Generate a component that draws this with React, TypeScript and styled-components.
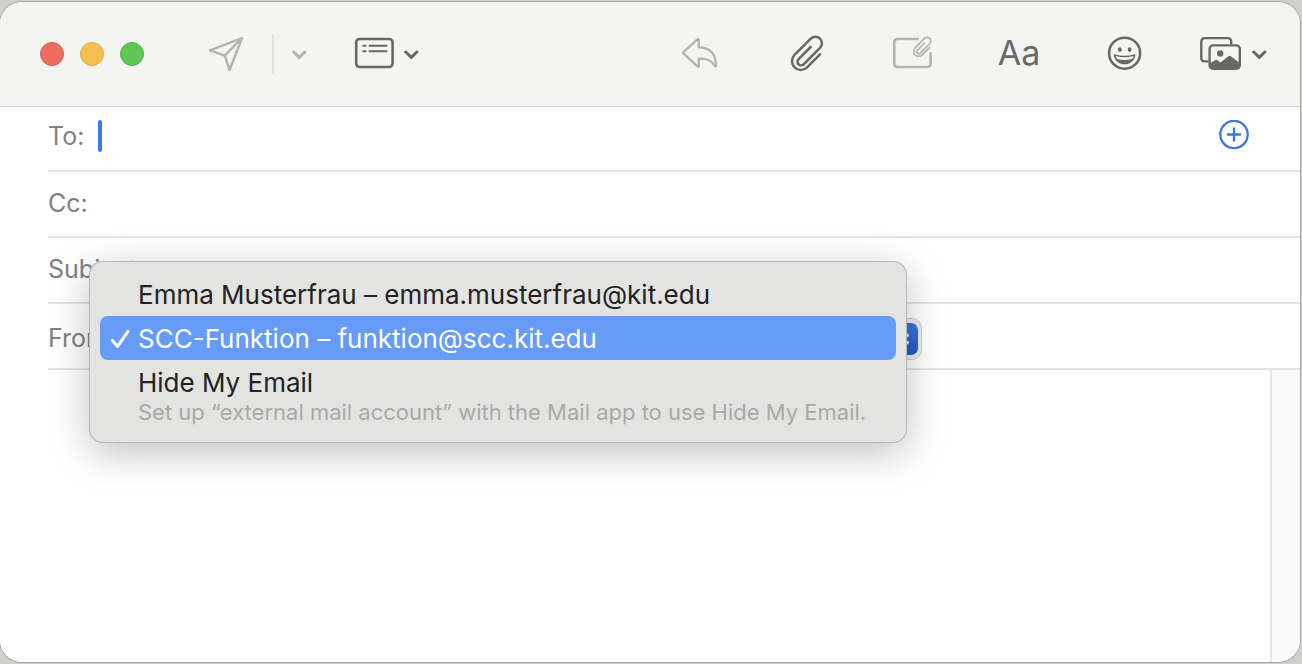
import React from "react";
import styled, { createGlobalStyle } from "styled-components";

const GlobalStyle = createGlobalStyle`
  *, *::before, *::after { box-sizing: border-box; }
  body {
    margin: 0;
    background: #cfcfcd;
    font-family: Inter, "Liberation Sans", sans-serif;
  }
  button, input, select, textarea { font: inherit; color: inherit; }
`;

const Page = styled.div`
  display: flex;
  min-height: 100vh;
  padding: 2px 2px 2px 0;
`;

const Window = styled.main`
  flex: 1;
  min-width: 0;
  display: flex;
  flex-direction: column;
  background: #fff;
  border-radius: 22px;
  overflow: hidden;
  box-shadow: 0 0 0 1px #a6a6a4;
`;

const Toolbar = styled.header`
  display: flex;
  align-items: center;
  justify-content: space-between;
  height: 105px;
  padding: 0 33px 0 40px;
  background: #f4f4f2;
  border-bottom: 1px solid #d4d4d2;
`;

const Group = styled.div<{ $gap: number }>`
  display: flex;
  align-items: center;
  gap: ${(p) => p.$gap}px;
`;

const Light = styled.button<{ $fill: string; $edge: string }>`
  width: 24px;
  height: 24px;
  padding: 0;
  border: 1px solid ${(p) => p.$edge};
  border-radius: 50%;
  background: ${(p) => p.$fill};
`;

const Tool = styled.button<{ $dim?: boolean; $cell?: boolean }>`
  display: flex;
  align-items: center;
  justify-content: center;
  height: 40px;
  width: ${(p) => (p.$cell ? "60px" : "auto")};
  padding: 0;
  border: 0;
  background: none;
  color: ${(p) => (p.$dim ? "#b4b3b1" : "#696866")};

  svg {
    display: block;
    fill: none;
    stroke: currentColor;
    stroke-linecap: round;
    stroke-linejoin: round;
  }
`;

const FormatTool = styled(Tool)`
  padding: 0 0 2px 2px;
  font-size: 34px;
  line-height: 38px;
`;

const Divider = styled.span`
  width: 2px;
  height: 40px;
  background: #e2e2e0;
`;

const SendGroup = styled(Group)`
  margin: 0 27px 0 44px;
`;

const Fields = styled.section`
  position: relative;
  z-index: 1;
  padding-left: 48px;
  border-top: 1px solid #f6f6f5;
`;

const Row = styled.div<{ $height?: number; $top?: number }>`
  position: relative;
  display: flex;
  align-items: flex-start;
  height: ${(p) => p.$height ?? 66}px;
  padding-top: ${(p) => p.$top ?? 15}px;
  border-bottom: 2px solid #e4e4e4;
  font-size: 25px;
  line-height: 32px;
  color: #808080;
`;

const Caret = styled.span`
  width: 4px;
  height: 32px;
  margin-left: 14px;
  border-radius: 2px;
  background: #3b78f0;
`;

const TextField = styled.input`
  flex: 1;
  min-width: 0;
  height: 32px;
  padding: 0;
  border: 0;
  outline: 0;
  background: none;
  color: #222;
`;

const AddButton = styled.button`
  height: 30px;
  margin-right: 51px;
  padding: 0;
  border: 0;
  background: none;
  color: #3e76df;

  svg {
    display: block;
    fill: none;
    stroke: currentColor;
    stroke-width: 2.3;
    stroke-linecap: round;
  }
`;

const Picker = styled.div`
  position: relative;
  flex: 0 1 799px;
  min-width: 0;
  height: 42px;
  margin: -4px 0 0 8px;
`;

const AccountSelect = styled.select`
  display: block;
  appearance: none;
  width: 100%;
  height: 42px;
  padding: 0 48px 0 12px;
  border: 1px solid #d0d0d0;
  border-radius: 10px;
  background: #ececec;
  color: #222;
`;

const Stepper = styled.span`
  position: absolute;
  top: 5px;
  right: 4px;
  width: 32px;
  height: 32px;
  border-radius: 7px;
  background: linear-gradient(#3a78e4, #2459cb);
  pointer-events: none;

  svg {
    display: block;
    fill: none;
    stroke: #fff;
    stroke-width: 3;
    stroke-linecap: round;
    stroke-linejoin: round;
  }
`;

const Menu = styled.div`
  position: absolute;
  top: -42px;
  left: 42px;
  width: 816px;
  max-width: calc(100% - 42px);
  padding: 10px 10px 16px;
  border-radius: 13px;
  background: #e3e3e1;
  box-shadow: 0 0 0 1px #b6b6b4, 0 10px 40px rgba(0, 0, 0, 0.26);
`;

const Option = styled.button<{ $selected?: boolean }>`
  display: flex;
  align-items: center;
  width: 100%;
  height: 44px;
  padding: 2px 0 0 10px;
  border: 0;
  border-radius: 8px;
  background: ${(p) => (p.$selected ? "#679bf8" : "transparent")};
  color: ${(p) => (p.$selected ? "#fff" : "#222")};
  font-size: 26px;
  text-align: left;
  white-space: nowrap;
`;

const Mark = styled.span`
  width: 28px;

  svg {
    display: block;
    fill: none;
    stroke: currentColor;
    stroke-width: 3;
    stroke-linecap: round;
    stroke-linejoin: round;
  }
`;

const Hint = styled.p`
  margin: -6px 0 0;
  padding: 1px 0 0 38px;
  font-size: 22px;
  line-height: 27px;
  color: #a9a9a7;
  white-space: nowrap;
`;

const Body = styled.section`
  flex: 1;
  display: flex;
`;

const Message = styled.textarea`
  flex: 1;
  min-width: 0;
  padding: 16px 48px;
  border: 0;
  outline: 0;
  resize: none;
  background: #fff;
  font-size: 25px;
`;

const Gutter = styled.div`
  width: 30px;
  border-left: 2px solid #e6e6e6;
  background: #fafafa;
`;

const CLIP =
  "M9.8 -8.6V9.8A8.8 8.8 0 0 1 -7.8 9.8V-13.1A6.55 6.55 0 0 1 5.3 -13.1V9.9A3.65 3.65 0 0 1 -2 9.9V-7.2";

const Chevron = () => (
  <svg width="15" height="40" viewBox="0 0 15 40" strokeWidth="3">
    <path d="M1.7 18 7.3 23.4 12.9 18" />
  </svg>
);

const SendIcon = () => (
  <svg width="36" height="40" viewBox="208 34 36 40" strokeWidth="2.4">
    <path d="M242 38 210 50.3 224.8 55.6 229.6 70ZM224.8 55.6 242 38" />
  </svg>
);

const HeaderIcon = () => (
  <svg width="40" height="40" viewBox="354 34 40 40" strokeWidth="2.6">
    <rect x="356.2" y="39" width="36.4" height="28" rx="3.5" />
    <path d="M363.2 45.8h2.4M369.5 45.8h17M363.2 51.2h2.4M369.5 51.2h17" strokeWidth="2" />
  </svg>
);

const ReplyIcon = () => (
  <svg width="40" height="40" viewBox="680 34 40 40" strokeWidth="2.4">
    <path d="M683.4 53.4Q682.8 52.8 683.4 52.2L697.2 39.6Q698.8 38.4 698.8 40.4V47.2C710.5 47.4 716 55 716 65.6Q716 67.6 714.6 65.6C711.3 60 706.8 58.6 698.8 58.6V65.4Q698.8 67.6 697.2 66.2Z" />
  </svg>
);

const ClipIcon = () => (
  <svg width="40" height="40" viewBox="786 34 40 40" strokeWidth="2.5">
    <path transform="translate(807 53.5) rotate(45)" d={CLIP} />
  </svg>
);

const MarkupIcon = () => (
  <svg width="42" height="40" viewBox="891 34 42 40" strokeWidth="2.6">
    <path d="M918.5 39H897.6Q894.2 39 894.2 42.4V63.6Q894.2 67 897.6 67H927.2Q930.6 67 930.6 63.6V52.2" strokeLinecap="butt" />
    <path transform="translate(922.3 46.9) rotate(45) scale(0.57)" d={CLIP} strokeWidth="3" />
  </svg>
);

const SmileyIcon = () => (
  <svg width="40" height="40" viewBox="1104 34 40 40" strokeWidth="2.5">
    <circle cx="1124.6" cy="53.2" r="15.5" />
    <g fill="currentColor" stroke="none">
      <ellipse cx="1119.8" cy="49.6" rx="1.9" ry="2.4" />
      <ellipse cx="1129.6" cy="49.6" rx="1.9" ry="2.4" />
      <path
        fillRule="evenodd"
        d="M1114.6 54.2Q1124.6 57.4 1134.6 54.2Q1135.6 54.2 1135.4 55.4C1134.2 61 1130 64.2 1124.6 64.2S1115 61 1113.8 55.4Q1113.6 54.2 1114.6 54.2ZM1115.6 56Q1116.2 58 1117.2 59Q1124.6 60.8 1132 59Q1133 58 1133.6 56Q1124.6 58.4 1115.6 56Z"
      />
    </g>
  </svg>
);

const PhotosIcon = () => (
  <svg width="42" height="40" viewBox="1200 34 42 40" strokeWidth="2.4">
    <path d="M1208.6 61.4H1205Q1201.3 61.4 1201.3 57.7V41.8Q1201.3 38.1 1205 38.1H1227.5Q1231.2 38.1 1231.2 41.8V44.5" strokeLinecap="butt" />
    <rect x="1209.6" y="45.4" width="30.2" height="23.4" rx="3.6" />
    <g fill="currentColor" stroke="none">
      <circle cx="1220.2" cy="53.4" r="3.2" />
      <path d="M1209.6 63.5 1215 60.2Q1216.4 59.3 1217.8 60.4L1220.6 62.4 1228 56.4Q1229.6 55.2 1231.2 56.4L1239.8 63V68.8H1209.6Z" />
    </g>
  </svg>
);

export default function App() {
  return (
    <Page>
      <GlobalStyle />
      <Window>
        <Toolbar>
          <Group $gap={20}>
            <Group $gap={16}>
              <Light aria-label="Close" $fill="#ed6b5f" $edge="#d95c51" />
              <Light aria-label="Minimize" $fill="#f5bf4f" $edge="#dca842" />
              <Light aria-label="Zoom" $fill="#62c655" $edge="#53ae47" />
            </Group>
            <SendGroup $gap={18}>
              <Group $gap={28}>
                <Tool $dim aria-label="Send"><SendIcon /></Tool>
                <Divider />
              </Group>
              <Tool $dim aria-label="Send later"><Chevron /></Tool>
            </SendGroup>
            <Tool aria-label="Header fields">
              <Group as="span" $gap={10}><HeaderIcon /><Chevron /></Group>
            </Tool>
          </Group>
          <Group $gap={46}>
            <Tool $cell $dim aria-label="Reply"><ReplyIcon /></Tool>
            <Tool $cell aria-label="Attach"><ClipIcon /></Tool>
            <Tool $cell $dim aria-label="Markup"><MarkupIcon /></Tool>
            <FormatTool $cell aria-label="Format">Aa</FormatTool>
            <Tool $cell aria-label="Emoji"><SmileyIcon /></Tool>
            <Tool aria-label="Photos">
              <Group as="span" $gap={10}><PhotosIcon /><Chevron /></Group>
            </Tool>
          </Group>
        </Toolbar>

        <Fields>
          <Row $height={64} $top={12}>
            <label htmlFor="to">To:</label>
            <Caret />
            <TextField id="to" />
            <AddButton aria-label="Add recipient">
              <svg width="30" height="30" viewBox="0 0 30 30">
                <circle cx="15" cy="14.5" r="13.7" />
                <path d="M15 8.3v12.4M8.8 14.5h12.4" />
              </svg>
            </AddButton>
          </Row>
          <Row>
            <label htmlFor="cc">Cc:</label>
            <TextField id="cc" />
          </Row>
          <Row>
            <label htmlFor="subject">Subject:</label>
            <TextField id="subject" />
          </Row>
          <Row $top={18}>
            <label htmlFor="from">From:</label>
            <Picker>
              <AccountSelect id="from" defaultValue="scc">
                <option value="scc">SCC-Funktion</option>
              </AccountSelect>
              <Stepper>
                <svg width="32" height="32" viewBox="0 0 32 32">
                  <path d="M10.5 12.5 16 7.5l5.5 5M10.5 19.5l5.5 5 5.5-5" />
                </svg>
              </Stepper>
            </Picker>
            <Menu role="listbox" aria-label="From account">
              <Option role="option">
                <Mark />
                Emma Musterfrau – emma.musterfrau@kit.edu
              </Option>
              <Option role="option" $selected aria-selected="true">
                <Mark>
                  <svg width="20" height="24" viewBox="0 0 20 24">
                    <path d="M2.4 13.4 7.6 19.4 18 4.4" />
                  </svg>
                </Mark>
                SCC-Funktion – funktion@scc.kit.edu
              </Option>
              <Option role="option">
                <Mark />
                Hide My Email
              </Option>
              <Hint>Set up “external mail account” with the Mail app to use Hide My Email.</Hint>
            </Menu>
          </Row>
        </Fields>

        <Body>
          <Message aria-label="Message" />
          <Gutter />
        </Body>
      </Window>
    </Page>
  );
}
